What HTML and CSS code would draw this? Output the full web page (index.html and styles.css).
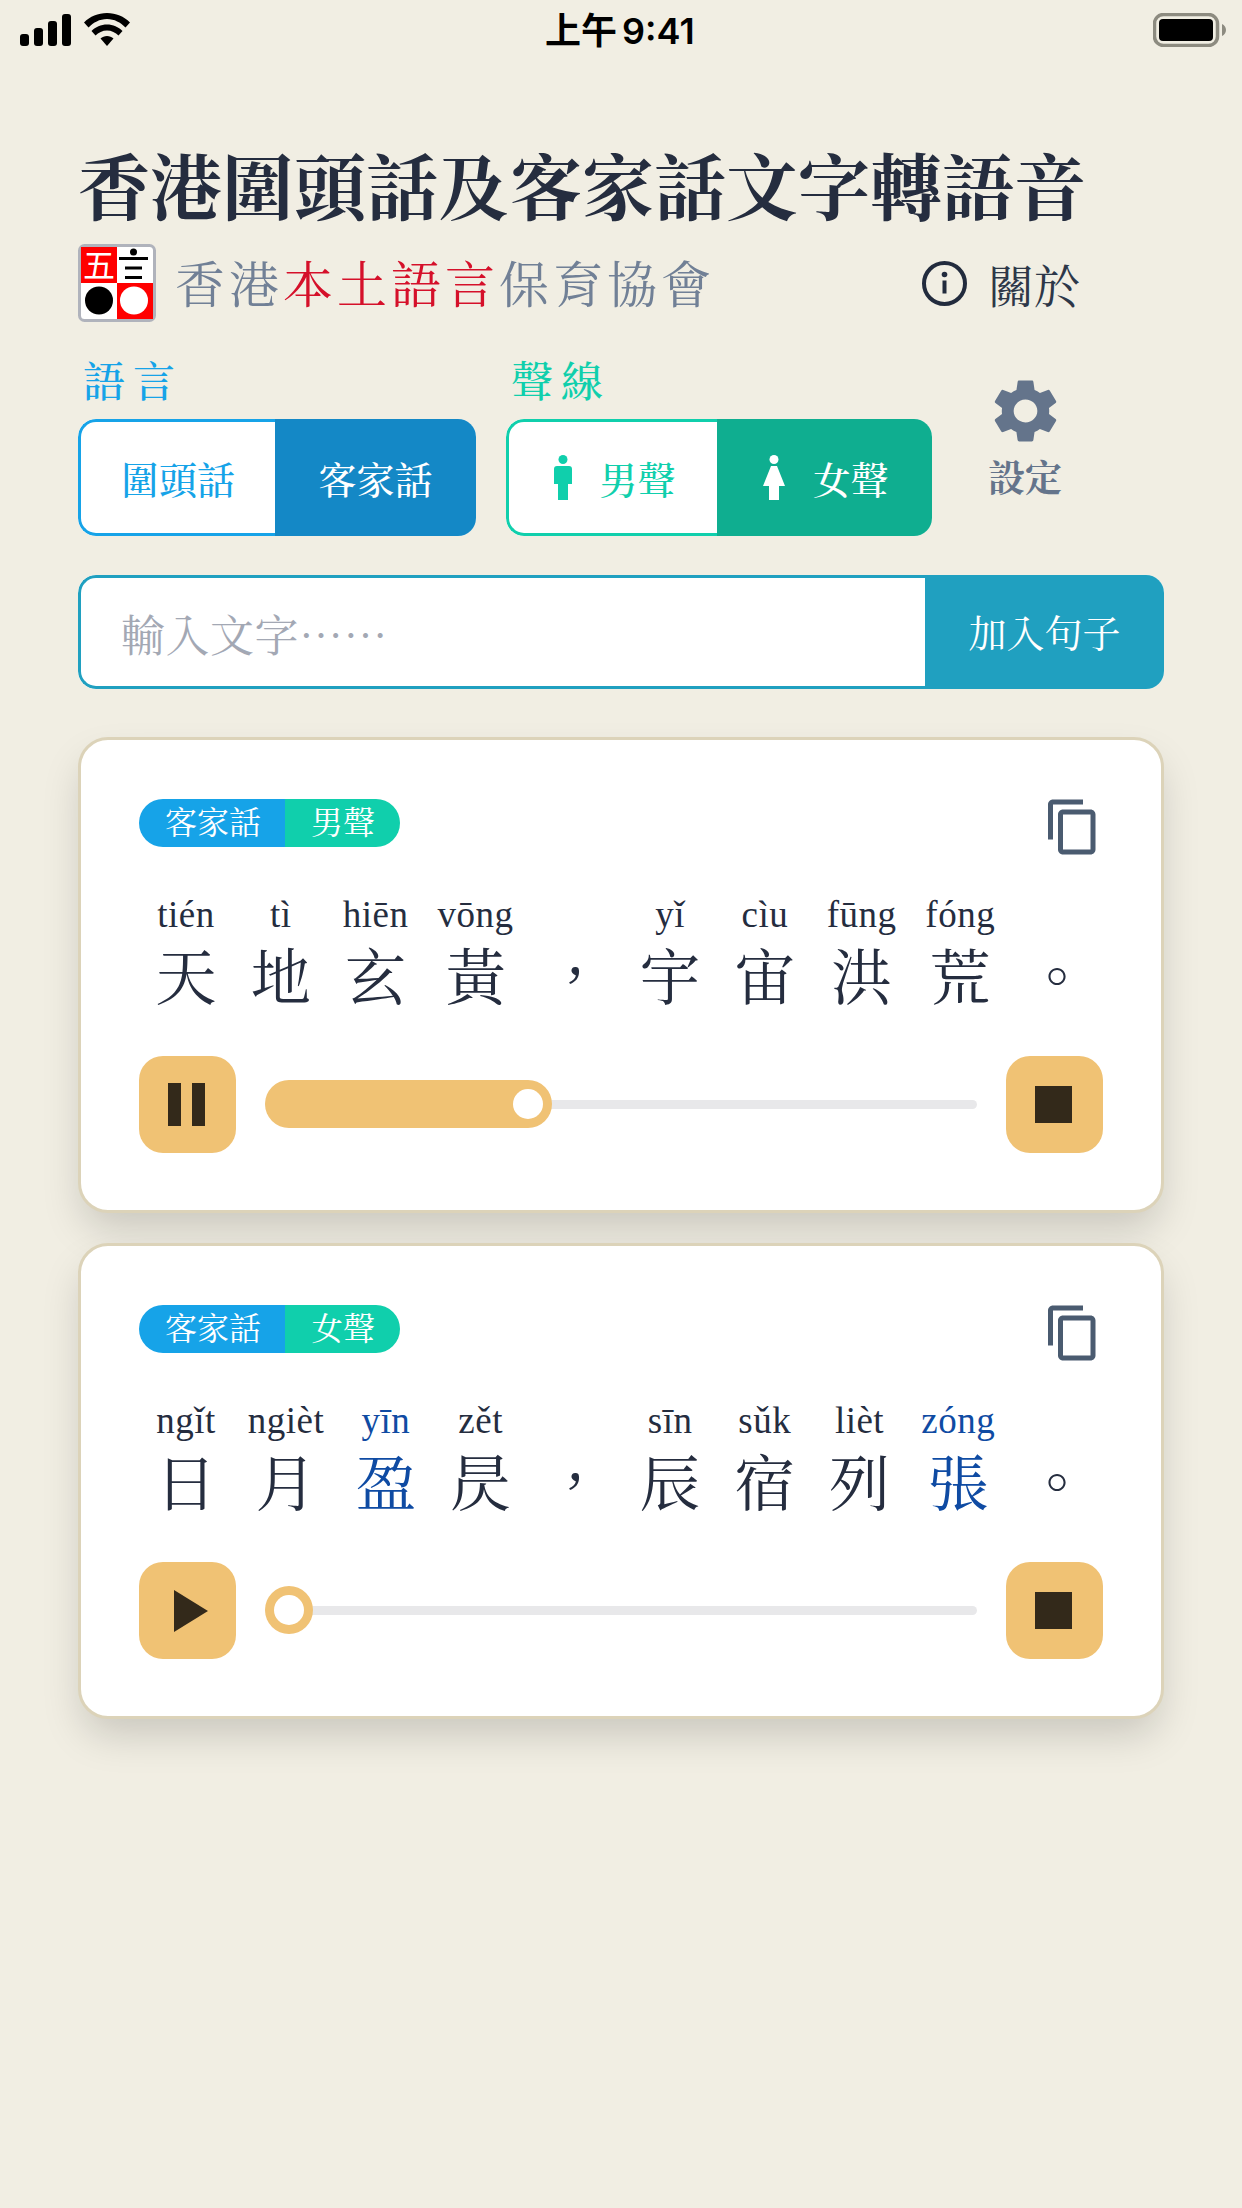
FILE: index.html
```html
<!DOCTYPE html>
<html lang="zh-Hant">
<head>
    <meta charset="UTF-8">
    <title>香港圍頭話及客家話文字轉語音</title>
    <link rel="stylesheet" href="styles.css">
</head>
<body>
    <div class="status-bar">
        <div class="status-left">
            <svg class="signal" width="52" height="32" viewBox="0 0 52 32">
                <rect x="0" y="20" width="9" height="12" rx="3"/>
                <rect x="14" y="14" width="9" height="18" rx="3"/>
                <rect x="28" y="7" width="9" height="25" rx="3"/>
                <rect x="42" y="0" width="9" height="32" rx="3"/>
            </svg>
            <svg class="wifi" width="46" height="33" viewBox="0 0 46 33">
                <path d="M23 0C14 0 6 3.500 0 9.500L4.500 14.500C9.500 9.500 15.500 6 23 6S36.500 9.500 41.500 14.500L46 9.500C40 3.500 32 0 23 0Z"/>
                <path d="M23 11.500C17 11.500 11.500 14 7.500 18L11.500 22.500C14.500 19.500 18.500 17.500 23 17.500S31.500 19.500 34.500 22.500L38.500 18C34.500 14 29 11.500 23 11.500Z"/>
                <path d="M23 23C20.500 23 18.300 24 16.500 25.500L23 33L29.500 25.500C27.700 24 25.500 23 23 23Z"/>
            </svg>
        </div>
        <div class="status-time">上午 9:41</div>
        <svg class="battery" width="73" height="34" viewBox="0 0 73 34">
            <rect x="1.500" y="1.500" width="63" height="31" rx="9" fill="none" stroke="#8d8b80" stroke-width="3.500"/>
            <rect x="6" y="6" width="54" height="22" rx="4"/>
            <path d="M69 11C71.500 12 73 14.500 73 17S71.500 22 69 23Z" fill="#8d8b80"/>
        </svg>
    </div>

    <main class="page">
        <h1 class="title">香港圍頭話及客家話文字轉語音</h1>

        <div class="sub-row">
            <div class="org">
                <svg class="logo" width="78" height="78" viewBox="0 0 78 78">
                    <rect x="1.500" y="1.500" width="75" height="75" rx="5" fill="#fff" stroke="#b0b3bc" stroke-width="3"/>
                    <rect x="3" y="3" width="36" height="36" fill="#f00"/>
                    <rect x="39" y="39" width="36" height="36" fill="#f00"/>
                    <text class="logo-char" x="21" y="33" text-anchor="middle">五</text>
                    <circle cx="55.500" cy="8" r="3.500"/>
                    <rect x="41" y="13" width="29" height="3"/>
                    <rect x="47" y="22.500" width="17" height="3"/>
                    <rect x="47" y="32" width="17" height="3"/>
                    <circle cx="21" cy="56.500" r="14"/>
                    <circle cx="56" cy="56.500" r="14" fill="#fff"/>
                </svg>
                <div class="org-name">香港<span class="red">本土語言</span>保育協會</div>
            </div>
            <div class="about">
                <svg width="45" height="45" viewBox="0 0 45 45">
                    <circle cx="22.500" cy="22.500" r="20.500" fill="none" stroke="#222b3d" stroke-width="4"/>
                    <circle cx="22.500" cy="13.500" r="2.800" fill="#222b3d"/>
                    <rect x="20.500" y="19.500" width="4" height="13" fill="#222b3d"/>
                </svg>
                <span>關於</span>
            </div>
        </div>

        <div class="options">
            <div class="opt-group opt-lang">
                <div class="opt-label">語言</div>
                <div class="segment">
                    <div class="seg-item">圍頭話</div>
                    <div class="seg-item active">客家話</div>
                </div>
            </div>
            <div class="opt-group opt-voice">
                <div class="opt-label">聲線</div>
                <div class="segment">
                    <div class="seg-item">
                        <svg width="18" height="45" viewBox="0 0 18 45" fill="currentColor">
                            <circle cx="9" cy="4.500" r="4.500"/>
                            <path d="M3 11H15Q18 11 18 14V29H14V45H4V29H0V14Q0 11 3 11Z"/>
                        </svg>
                        <span>男聲</span>
                    </div>
                    <div class="seg-item active">
                        <svg width="22" height="45" viewBox="0 0 22 45" fill="currentColor">
                            <circle cx="11" cy="4.500" r="4.500"/>
                            <path d="M8 11H14L22 31H16V45H6V31H0Z"/>
                        </svg>
                        <span>女聲</span>
                    </div>
                </div>
            </div>
            <div class="settings">
                <svg class="gear" width="79" height="76" viewBox="0 0 24 24" preserveAspectRatio="none" fill="#64748b">
                    <path d="M19.140 12.940c.04-.3.060-.61.060-.94 0-.32-.02-.64-.07-.94l2.030-1.580c.18-.14.230-.41.120-.61l-1.920-3.320c-.12-.22-.37-.29-.59-.22l-2.390.96c-.5-.38-1.030-.7-1.620-.94l-.36-2.540c-.04-.24-.24-.41-.48-.41h-3.840c-.24 0-.43.170-.47.410l-.36 2.540c-.59.24-1.130.57-1.620.94l-2.390-.96c-.22-.08-.47 0-.59.22L2.740 8.870c-.12.21-.08.47.12.61l2.030 1.580c-.05.3-.09.63-.09.94s.02.64.07.94l-2.030 1.580c-.18.14-.23.41-.12.61l1.920 3.320c.12.22.37.29.59.22l2.390-.96c.5.38 1.030.7 1.620.94l.36 2.540c.05.24.24.41.48.41h3.840c.24 0 .44-.17.47-.41l.36-2.540c.59-.24 1.130-.56 1.620-.94l2.390.96c.22.08.47 0 .59-.22l1.920-3.320c.12-.22.07-.47-.12-.61l-2.010-1.580zM12 15.600c-1.980 0-3.600-1.620-3.600-3.600s1.620-3.600 3.600-3.600 3.600 1.620 3.600 3.600-1.620 3.600-3.600 3.600z"/>
                </svg>
                <div class="settings-label">設定</div>
            </div>
        </div>

        <div class="input-row">
            <div class="input-box">輸入文字……</div>
            <div class="input-btn">加入句子</div>
        </div>

        <section class="card">
            <div class="card-top">
                <div class="badge">
                    <span class="badge-lang">客家話</span>
                    <span class="badge-voice">男聲</span>
                </div>
                <svg class="copy" width="60" height="60" viewBox="0 0 24 24" fill="#4a5b70">
                    <path d="M16 1H4c-1.100 0-2 .9-2 2v14h2V3h12V1zm3 4H8c-1.100 0-2 .9-2 2v14c0 1.100.9 2 2 2h11c1.100 0 2-.9 2-2V7c0-1.100-.9-2-2-2zm0 16H8V7h11v14z"/>
                </svg>
            </div>
            <div class="line">
                <div class="cell"><span class="py">tién</span><span class="ch">天</span></div>
                <div class="cell"><span class="py">tì</span><span class="ch">地</span></div>
                <div class="cell"><span class="py">hiēn</span><span class="ch">玄</span></div>
                <div class="cell"><span class="py">vōng</span><span class="ch">黃</span></div>
                <div class="cell"><span class="py">&nbsp;</span><span class="ch">，</span></div>
                <div class="cell"><span class="py">yǐ</span><span class="ch">宇</span></div>
                <div class="cell"><span class="py">cìu</span><span class="ch">宙</span></div>
                <div class="cell"><span class="py">fūng</span><span class="ch">洪</span></div>
                <div class="cell"><span class="py">fóng</span><span class="ch">荒</span></div>
                <div class="cell"><span class="py">&nbsp;</span><span class="ch">。</span></div>
            </div>
            <div class="player">
                <div class="ctl">
                    <svg class="pause-icon" width="37" height="43" viewBox="0 0 37 43" fill="#33291a">
                        <rect x="0" y="0" width="13" height="43"/>
                        <rect x="24" y="0" width="13" height="43"/>
                    </svg>
                </div>
                <div class="slider">
                    <div class="fill" style="width: 287px"></div>
                </div>
                <div class="ctl">
                    <svg class="stop-icon" width="37" height="37" viewBox="0 0 37 37" fill="#33291a"><rect width="37" height="37"/></svg>
                </div>
            </div>
        </section>

        <section class="card">
            <div class="card-top">
                <div class="badge">
                    <span class="badge-lang">客家話</span>
                    <span class="badge-voice">女聲</span>
                </div>
                <svg class="copy" width="60" height="60" viewBox="0 0 24 24" fill="#4a5b70">
                    <path d="M16 1H4c-1.100 0-2 .9-2 2v14h2V3h12V1zm3 4H8c-1.100 0-2 .9-2 2v14c0 1.100.9 2 2 2h11c1.100 0 2-.9 2-2V7c0-1.100-.9-2-2-2zm0 16H8V7h11v14z"/>
                </svg>
            </div>
            <div class="line">
                <div class="cell"><span class="py">ngǐt</span><span class="ch">日</span></div>
                <div class="cell"><span class="py">ngièt</span><span class="ch">月</span></div>
                <div class="cell hl"><span class="py">yīn</span><span class="ch">盈</span></div>
                <div class="cell"><span class="py">zět</span><span class="ch">昃</span></div>
                <div class="cell"><span class="py">&nbsp;</span><span class="ch">，</span></div>
                <div class="cell"><span class="py">sīn</span><span class="ch">辰</span></div>
                <div class="cell"><span class="py">sǔk</span><span class="ch">宿</span></div>
                <div class="cell"><span class="py">lièt</span><span class="ch">列</span></div>
                <div class="cell hl"><span class="py">zóng</span><span class="ch">張</span></div>
                <div class="cell"><span class="py">&nbsp;</span><span class="ch">。</span></div>
            </div>
            <div class="player">
                <div class="ctl">
                    <svg class="play-icon" width="34" height="42" viewBox="0 0 34 42" fill="#33291a"><path d="M0 0L34 21L0 42Z"/></svg>
                </div>
                <div class="slider">
                    <div class="fill" style="width: 48px"></div>
                </div>
                <div class="ctl">
                    <svg class="stop-icon" width="37" height="37" viewBox="0 0 37 37" fill="#33291a"><rect width="37" height="37"/></svg>
                </div>
            </div>
        </section>
    </main>
</body>
</html>
```

FILE: styles.css
```css
*
{
    box-sizing: border-box;
}

html, body
{
    margin: 0;
    height: 100%;
}

body
{
    background-color: #f1eee3;
    color: #252d3f;
    font-family: "Liberation Serif", "Noto Serif CJK TC", "Noto Sans CJK TC", serif;
}

svg
{
    display: block;
    flex-shrink: 0;
}

/* status bar */
.status-bar
{
    height: 60px;
    padding: 13px 16px 0 20px;
    display: flex;
    justify-content: space-between;
    position: relative;
}

.status-left
{
    display: flex;
    align-items: flex-start;
    gap: 12px;
}

.signal
{
    margin-top: 1px;
}

.status-time
{
    position: absolute;
    left: 545px;
    top: 6px;
    font-family: "Inter", "Noto Sans CJK TC", sans-serif;
    font-size: 36px;
    line-height: 50px;
    font-weight: 600;
    word-spacing: -4px;
    color: #000;
}

/* header */
.page
{
    padding: 87px 78px 0;
}

.title
{
    margin: 0;
    font-size: 72px;
    line-height: 86px;
    font-weight: 700;
}

.sub-row
{
    margin-top: 11px;
    display: flex;
    align-items: center;
    justify-content: space-between;
    padding-right: 84px;
}

.org
{
    display: flex;
    align-items: center;
    gap: 19px;
}

.logo
{
    overflow: visible;
}

.logo-char
{
    font-family: "Noto Sans CJK TC", sans-serif;
    font-size: 32px;
    fill: #fff;
}

.org-name
{
    font-size: 50px;
    letter-spacing: 4px;
    line-height: 72px;
    padding-top: 6px;
    color: #718096;
    white-space: nowrap;
}

.red
{
    color: #d5102a;
}

.about
{
    display: flex;
    align-items: center;
    gap: 21px;
    font-size: 46px;
    color: #2d3748;
}

/* language and voice */
.options
{
    margin-top: 36px;
    display: flex;
    align-items: flex-end;
}

.opt-label
{
    font-size: 42px;
    font-weight: 500;
    line-height: 50px;
    letter-spacing: 8px;
    padding-left: 5px;
    margin-bottom: 11px;
}

.opt-lang
{
    width: 398px;
    color: #16a3e8;
    --active: #1488c6;
}

.opt-voice
{
    width: 426px;
    margin-left: 30px;
    color: #10cfac;
    --active: #0fae90;
}

.segment
{
    height: 117px;
    display: flex;
    background-color: #fff;
    border-radius: 18px;
    overflow: hidden;
}

.seg-item
{
    flex: 1;
    display: flex;
    align-items: center;
    justify-content: center;
    gap: 27px;
    font-size: 38px;
    font-weight: 500;
}

.seg-item:first-child
{
    border: 3px solid currentColor;
    border-right: none;
    border-radius: 18px 0 0 18px;
}

.opt-lang .seg-item:first-child
{
    flex: 0 0 197px;
}

.opt-voice .seg-item:first-child
{
    flex: 0 0 211px;
    padding-left: 4px;
}

.opt-voice .seg-item.active
{
    padding-left: 3px;
}

.seg-item.active
{
    background-color: var(--active);
    color: #fff;
}

.settings
{
    width: 118px;
    margin-left: 34px;
    margin-bottom: 33px;
    display: flex;
    flex-direction: column;
    align-items: center;
    color: #64748b;
}

.settings-label
{
    margin-top: 8px;
    font-size: 37px;
    line-height: 46px;
    font-weight: 700;
}

/* text input */
.input-row
{
    margin-top: 39px;
    height: 114px;
    display: flex;
    background-color: #fff;
    border-radius: 18px;
    overflow: hidden;
}

.input-box
{
    flex: 1;
    padding: 2px 0 0 40px;
    display: flex;
    align-items: center;
    border: 3px solid #20a0c0;
    border-right: none;
    border-radius: 18px 0 0 18px;
    font-family: "Noto Serif CJK TC", "Noto Sans CJK TC", serif;
    font-size: 44px;
    letter-spacing: 0.5px;
    color: #a3a8b4;
}

.input-btn
{
    flex: 0 0 239px;
    padding-bottom: 3px;
    display: flex;
    align-items: center;
    justify-content: center;
    background-color: #20a0c0;
    color: #fff;
    font-size: 38px;
}

/* sentence cards */
.card
{
    height: 476px;
    margin-top: 48px;
    padding: 59px 58px 0;
    background-color: #fff;
    border: 3px solid #dcd3b9;
    border-radius: 30px;
    box-shadow: 0 20px 40px -5px rgba(0, 0, 0, 0.17);
}

.card + .card
{
    margin-top: 30px;
}

.card-top
{
    height: 60px;
    display: flex;
    justify-content: space-between;
}

.copy
{
    margin-top: -2px;
}

.badge
{
    height: 48px;
    display: flex;
    border-radius: 24px;
    overflow: hidden;
    color: #fff;
    font-size: 32px;
    line-height: 48px;
}

.badge-lang
{
    padding: 0 24px 0 26px;
    background-color: #16a3e8;
}

.badge-voice
{
    padding: 0 25px 0 26px;
    background-color: #10cfac;
}

.line
{
    margin-top: 34px;
    padding: 0 13px 0 14px;
    display: flex;
    justify-content: space-between;
}

.cell
{
    min-width: 66px;
    display: flex;
    flex-direction: column;
    align-items: center;
}

.py
{
    font-size: 37px;
    line-height: 44px;
    letter-spacing: 0.5px;
    white-space: nowrap;
}

.ch
{
    margin-top: 7px;
    font-size: 61px;
    line-height: 72px;
}

.hl
{
    color: #0f4ba3;
}

.player
{
    margin-top: 40px;
    display: flex;
    align-items: center;
    gap: 29px;
}

.ctl
{
    flex: 0 0 97px;
    height: 97px;
    display: flex;
    align-items: center;
    justify-content: center;
    background-color: #f0c274;
    border-radius: 24px;
}

.pause-icon
{
    margin-left: -2px;
}

.stop-icon
{
    margin-left: -3px;
}

.play-icon
{
    margin-left: 6px;
}

.slider
{
    flex: 1;
    height: 9px;
    position: relative;
    background-color: #e8e8ea;
    border-radius: 5px;
}

.fill
{
    position: absolute;
    left: 0;
    top: -20px;
    height: 48px;
    background-color: #f0c274;
    border-radius: 24px;
}

.fill::after
{
    content: "";
    position: absolute;
    right: 9px;
    top: 9px;
    width: 30px;
    height: 30px;
    border-radius: 50%;
    background-color: #fff;
}
```
